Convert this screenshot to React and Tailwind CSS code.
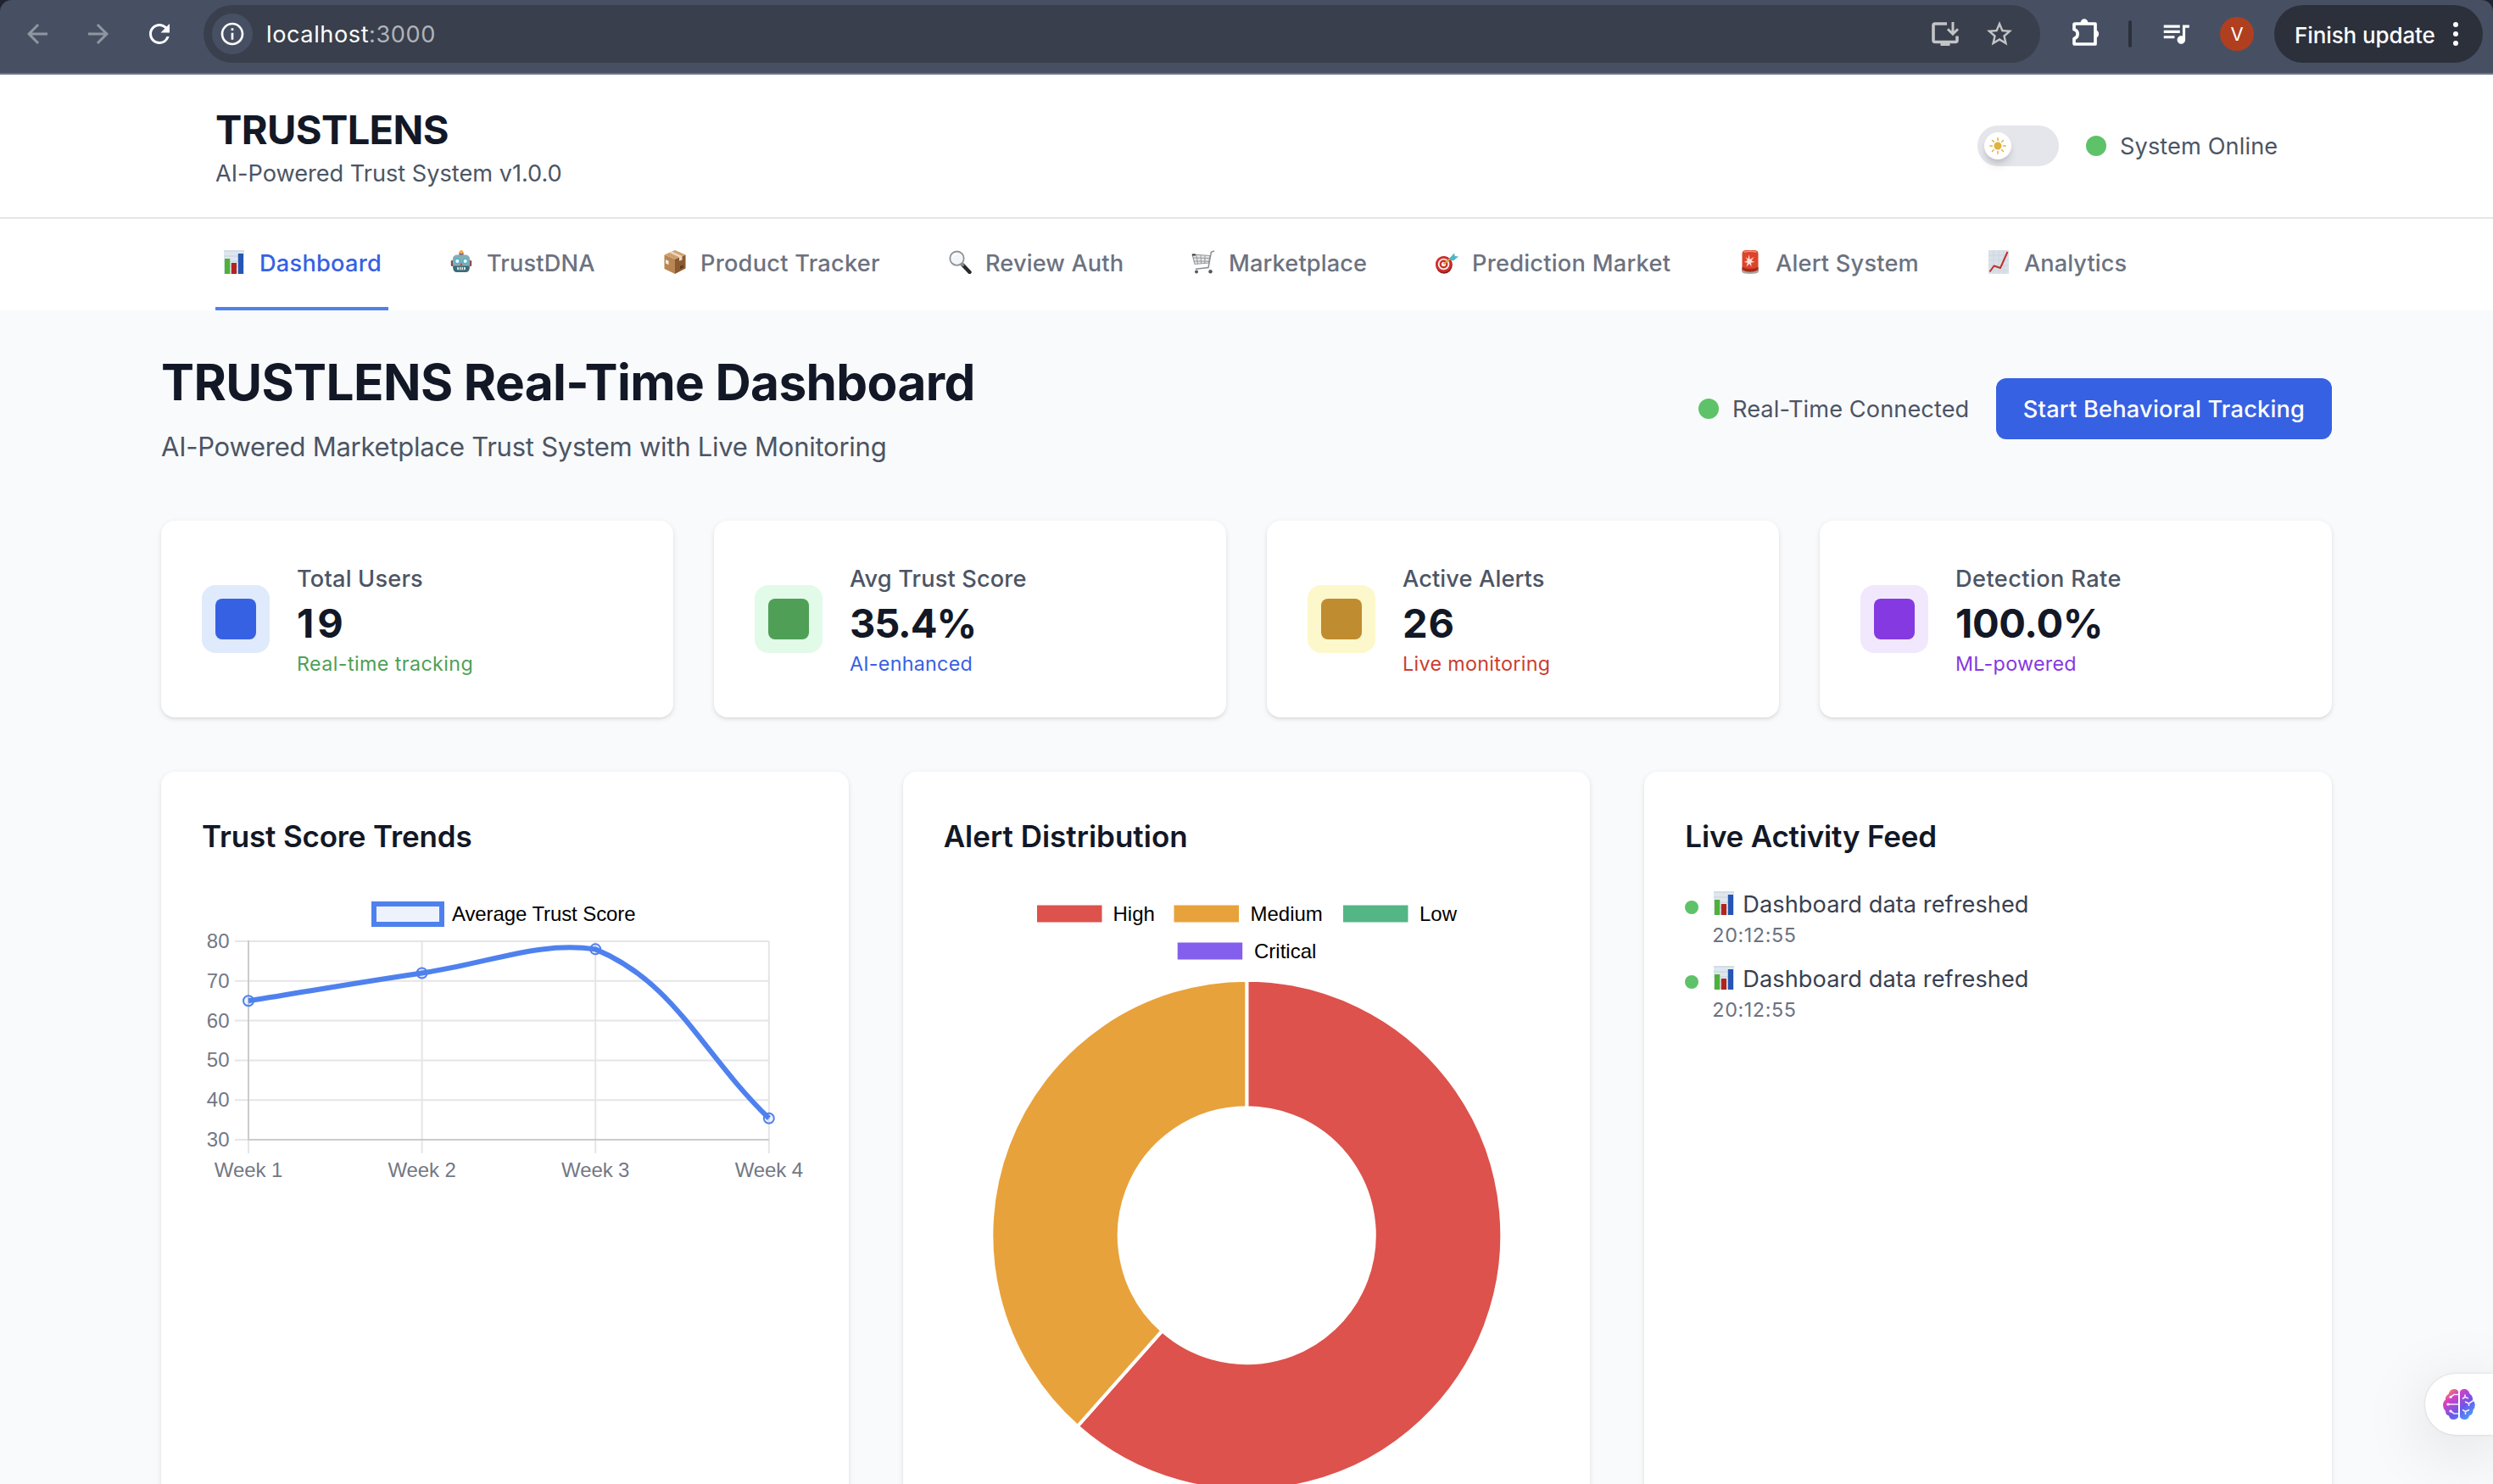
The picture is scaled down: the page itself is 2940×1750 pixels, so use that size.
import React from "react";
import { MdArrowBack, MdArrowForward, MdRefresh, MdInfoOutline, MdStarBorder, MdQueueMusic } from "react-icons/md";

/* ---------- emoji-style icons ---------- */

function BarChartIcon({ className }) {
  return (
    <svg viewBox="0 0 28 28" className={className}>
      <rect x="2" y="0" width="24" height="28" fill="#dfe7ee" />
      <path d="M2 1h24M2 7h24M2 13h24M2 19h24M2 25h24" stroke="#c6d2dc" strokeWidth="1" />
      <rect x="3" y="10" width="6.2" height="18" fill="#4fb13a" />
      <rect x="10.8" y="15" width="6.2" height="13" fill="#b32420" />
      <rect x="18.8" y="4" width="6.2" height="24" fill="#2556b4" />
    </svg>
  );
}

function RobotIcon({ className }) {
  return (
    <svg viewBox="0 0 28 28" className={className}>
      <rect x="11.500" y="2" width="5" height="4.500" rx="1" fill="#6a4a8c" />
      <circle cx="14" cy="2.200" r="2.200" fill="#f2a93b" />
      <rect x="1.800" y="12" width="3" height="7" rx="1.200" fill="#8a4a52" />
      <rect x="23.200" y="12" width="3" height="7" rx="1.200" fill="#8a4a52" />
      <path d="M3.800 11q0-5.600 5.800-5.600h8.800q5.800 0 5.800 5.600l-.6 10.500q-.5 4.500-5 4.500H9.400q-4.500 0-5-4.500z" fill="#86adb5" />
      <path d="M4.200 18.500l.2 3q.5 4.500 5 4.500h9.200q4.500 0 5-4.500l.2-3z" fill="#3b6c77" />
      <circle cx="9.300" cy="13" r="3.500" fill="#45b9d4" />
      <circle cx="18.700" cy="13" r="3.500" fill="#45b9d4" />
      <circle cx="9.300" cy="13" r="2" fill="#fff" />
      <circle cx="18.700" cy="13" r="2" fill="#fff" />
      <path d="M14 14.500l1.700 3.500h-3.400z" fill="#d9483b" />
      <rect x="9" y="20" width="10" height="3.200" rx="1" fill="#dfe6e8" />
      <path d="M11.500 20v3.200M14 20v3.200M16.500 20v3.200" stroke="#40616b" strokeWidth=".9" />
    </svg>
  );
}

function PackageIcon({ className }) {
  return (
    <svg viewBox="0 0 28 28" className={className}>
      <path d="M1.500 5.500L14 10.500V28L1.500 22z" fill="#b98552" />
      <path d="M14 10.500L26.500 5.500V21.500L14 28z" fill="#8a5a30" />
      <path d="M1.500 5.500L14 0L26.500 5.500L14 10.500z" fill="#cf9f6c" />
      <path d="M7.500 3L10.700 1.600L22.500 7v4.500l-3.500 1.300V8.300z" fill="#ead7be" />
      <path d="M3 11l3.500 1.700v4.500L3 15.500z" fill="#f1ebe2" />
      <path d="M20 19l3.500-1.500v3L20 22z" fill="#5c3a1d" />
    </svg>
  );
}

function MagnifierIcon({ className }) {
  return (
    <svg viewBox="0 0 28 28" className={className}>
      <path d="M17.500 17.500L25.500 26" stroke="#2a2a2c" strokeWidth="4.400" strokeLinecap="round" />
      <path d="M15.500 15.500l3 3" stroke="#8f9297" strokeWidth="2.600" />
      <circle cx="10.500" cy="9.700" r="8.200" fill="#f3f6f8" stroke="#8d9299" strokeWidth="1.800" />
      <path d="M5.500 8.500a5.500 5.500 0 0 1 5-4" stroke="#fff" strokeWidth="1.600" fill="none" />
    </svg>
  );
}

function CartIcon({ className }) {
  return (
    <svg viewBox="0 0 28 28" className={className} fill="none">
      <path d="M1 5l21 1.500L20.500 15 4 16.500z" fill="#e6e7e8" stroke="#97999c" strokeWidth="1.100" />
      <path d="M2 9l19.800.6M3 13l18 .2M6 5.500l1.500 10.700M11 5.800l.6 10M16 6.200l-.3 9.500" stroke="#97999c" strokeWidth="1" />
      <path d="M27 1l-3.600 1.200L20 20.500 5 22.200" stroke="#8b8d90" strokeWidth="1.500" />
      <circle cx="6" cy="25.500" r="2" fill="#55575a" />
      <circle cx="22.500" cy="25.300" r="2.200" fill="#55575a" />
      <path d="M1 5.500h4" stroke="#3a3c40" strokeWidth="2" />
    </svg>
  );
}

function TargetIcon({ className }) {
  return (
    <svg viewBox="0 0 28 28" className={className}>
      <ellipse cx="11" cy="17.500" rx="9.800" ry="10.200" fill="#8e1b18" />
      <circle cx="10.500" cy="16.500" r="9.500" fill="#cf2f2a" />
      <circle cx="10.500" cy="16.500" r="6.800" fill="#f6f2f0" />
      <circle cx="10.500" cy="16.500" r="4.900" fill="#cf2f2a" />
      <circle cx="10.500" cy="16.500" r="2.600" fill="#f6f2f0" />
      <path d="M10.500 16.500L20 8.500" stroke="#d8a03c" strokeWidth="2" />
      <path d="M17.500 9.500L23 3.500l.8 3.500L28 7.500 22.500 12l-3 .5z" fill="#4fb7c4" />
    </svg>
  );
}

function SirenIcon({ className }) {
  return (
    <svg viewBox="0 0 28 28" className={className}>
      <path d="M4 23h20v2q0 3-10 3T4 25z" fill="#a9a4a0" />
      <path d="M4.500 4q0-4 5-4h9q5 0 5 4v19q-4 2.500-9.500 2.500T4.500 23z" fill="#dd4429" />
      <path d="M4.500 20q9.500 4 19 0V23q-4 2.500-9.500 2.500T4.500 23z" fill="#a92818" />
      <path d="M6.500 2.300q7.500-2 15 0" stroke="#f3917a" strokeWidth="1.600" fill="none" />
      <path d="M12.500 5l1.200 6 4.800-3-3 4.500 4 1.500-4.500.8.600 4.700-2.600-3.500L9.500 19.500l1.300-4.700-4-.8 4-1.800L8.500 8l3 2.500z" fill="#fbe0d8" />
    </svg>
  );
}

function TrendIcon({ className }) {
  return (
    <svg viewBox="0 0 28 28" className={className}>
      <rect x="2" y="0" width="24" height="28" fill="#d9e1e9" />
      <path d="M2 6h24M2 12h24M2 18h24M2 24h24M8 0v28M14 0v28M20 0v28" stroke="#cbd5de" strokeWidth=".8" />
      <path d="M3.500 25.500L8.500 18.500l7.500 2.500L24.500 2" stroke="#c2302b" strokeWidth="2" fill="none" strokeLinejoin="round" />
    </svg>
  );
}

/* ---------- browser toolbar ---------- */

function InstallIcon() {
  return (
    <svg viewBox="0 0 32 28" className="h-7 w-8" fill="none" stroke="#c3c4c6" strokeWidth="3.600">
      <path d="M18 2H4Q2 2 2 4V21.500Q2 23.500 4 23.500H28Q30 23.500 30 21.500V16.500" />
      <path d="M10.500 26H21.500" strokeWidth="4" />
      <path d="M25 0V13M19 8.200L25 14.200L31 8.200" strokeWidth="3" />
    </svg>
  );
}

function PuzzleIcon() {
  return (
    <svg viewBox="0 0 32 32" className="size-8">
      <path
        d="M3 6H27V30H3Q2 30 2 29V23.500A5.600 5.600 0 0 0 2 12.700V7Q2 6 3 6Z"
        fill="none"
        stroke="#fff"
        strokeWidth="3.700"
        strokeLinejoin="round"
      />
      <path d="M9.500 5A4.500 4.700 0 0 1 18.500 5ZM27.500 13.500A4.500 4.600 0 0 1 27.500 22.500Z" fill="#fff" />
    </svg>
  );
}

function Toolbar() {
  return (
    <div className="bg-[#1f2430]">
      <div className="flex h-[88px] items-start rounded-t-[14px] border-b-2 border-[#6d7687] bg-[#475063] pt-1.5">
        <div className="flex h-[68px] w-full items-center">
          <MdArrowBack className="ml-[26px] size-9 text-[#8f96a2]" />
          <MdArrowForward className="ml-9 size-9 text-[#8f96a2]" />
          <MdRefresh className="ml-9 size-9 text-white" />
          <div className="ml-[34px] flex h-[68px] w-[2166px] items-center rounded-full bg-[#393f4c]">
            <div className="ml-2.5 flex size-12 items-center justify-center rounded-full bg-[#475063]">
              <MdInfoOutline className="size-8 text-white" />
            </div>
            <div className="ml-4 flex-1 pt-0.5 text-[27.2px] tracking-[0.55px] text-white">
              localhost<span className="text-[#b0b3b8]">:3000</span>
            </div>
            <InstallIcon />
            <MdStarBorder className="mr-[30px] ml-[30px] size-9 text-[#c3c4c6]" />
          </div>
          <div className="-mt-1 ml-[38px]">
            <PuzzleIcon />
          </div>
          <div className="ml-[34px] h-8 w-1 rounded-full bg-[#2b303b]" />
          <MdQueueMusic className="-mt-0.5 ml-[33px] size-[38px] text-white" />
          <div className="ml-[33px] flex size-10 items-center justify-center rounded-full bg-[#b03f20] text-[22px] text-white">V</div>
          <div className="ml-6 flex h-[68px] w-[246px] items-center rounded-full bg-[#2b303b] pl-6 text-[26px] font-medium tracking-[-0.1px] text-white">
            <span className="w-[187px] pt-0.5 whitespace-nowrap">Finish update</span>
            <div className="flex flex-col gap-[5px]">
              <i className="size-1.5 rounded-full bg-white" />
              <i className="size-1.5 rounded-full bg-white" />
              <i className="size-1.5 rounded-full bg-white" />
            </div>
          </div>
        </div>
      </div>
    </div>
  );
}

/* ---------- app header and tabs ---------- */

function SunIcon() {
  return (
    <svg viewBox="0 0 20 20" className="size-5" stroke="#e0b23e" strokeWidth="1.500" strokeLinecap="round">
      <circle cx="10" cy="10" r="4.500" fill="#e0b23e" stroke="none" />
      <path d="M10 .8v2.600M10 16.600v2.600M.8 10h2.600M16.600 10h2.600M3.500 3.500l1.800 1.800M14.700 14.700l1.800 1.800M3.500 16.500l1.800-1.800M14.700 5.300l1.800-1.800" />
    </svg>
  );
}

function Header() {
  return (
    <header className="flex items-center justify-between border-b-2 border-[#e5e6eb] bg-white px-[254px] pt-[33px] pb-[31px]">
      <div>
        <h1 className="text-[47px] leading-[64px] font-bold tracking-[-0.63px] text-[#121826]">TRUSTLENS</h1>
        <p className="text-[27.2px] leading-10 tracking-[-0.03px] text-[#4c5564]">AI-Powered Trust System v1.0.0</p>
      </div>
      <div className="-mt-0.5 flex items-center">
        <div className="flex h-12 w-24 items-center rounded-full bg-[#e5e6eb] pl-2">
          <div className="flex size-8 items-center justify-center rounded-full bg-white shadow-[0_8px_12px_-2px_rgba(0,0,0,0.12),0_4px_6px_-2px_rgba(0,0,0,0.1)]">
            <SunIcon />
          </div>
        </div>
        <div className="ml-8 size-6 rounded-full bg-[#5ec269]" />
        <span className="ml-4 w-[186px] pt-0.5 text-[27.2px] leading-10 tracking-[0.1px] whitespace-nowrap text-[#4c5564]">System Online</span>
      </div>
    </header>
  );
}

const TABS = [
  { label: "Dashboard", Icon: BarChartIcon, size: "w-[204px] tracking-[0.25px]", active: true },
  { label: "TrustDNA", Icon: RobotIcon, size: "w-[188px] tracking-[0.15px]" },
  { label: "Product Tracker", Icon: PackageIcon, size: "w-[272px] tracking-[0.25px]" },
  { label: "Review Auth", Icon: MagnifierIcon, size: "w-[223px] tracking-[0.13px]" },
  { label: "Marketplace", Icon: CartIcon, size: "w-[223px] tracking-[0.13px]" },
  { label: "Prediction Market", Icon: TargetIcon, size: "w-[294px] tracking-[0.25px]" },
  { label: "Alert System", Icon: SirenIcon, size: "w-[229px] tracking-[0.2px]" },
  { label: "Analytics", Icon: TrendIcon, size: "w-[182px] tracking-[0.06px]" },
];

function Tabs() {
  return (
    <nav className="flex gap-16 bg-white px-[254px]">
      {TABS.map(({ label, Icon, size, active }) => (
        <div
          key={label}
          className={
            "flex items-center gap-4 border-b-4 px-2 pt-[33px] pb-[31px] text-[27.2px] leading-10 font-medium whitespace-nowrap " +
            (active ? "border-[#4f81ee] text-[#3761e3] " : "border-transparent text-[#6c7280] ") +
            size
          }
        >
          <Icon className="-mt-1 size-7 shrink-0" />
          {label}
        </div>
      ))}
    </nav>
  );
}

/* ---------- dashboard ---------- */

const STATS = [
  { label: "Total Users", value: "19", note: "Real-time tracking", outer: "bg-[#dfeafc]", inner: "bg-[#3761e3]", lt: "tracking-[0.19px]", vt: "tracking-[4px]", nt: "tracking-[0.4px] text-[#4fa056]" },
  { label: "Avg Trust Score", value: "35.4%", note: "AI-enhanced", outer: "bg-[#e2fae8]", inner: "bg-[#4fa056]", lt: "tracking-[0.14px]", vt: "tracking-[-1.1px]", nt: "tracking-[0.26px] text-[#3761e3]" },
  { label: "Active Alerts", value: "26", note: "Live monitoring", outer: "bg-[#fdf8cb]", inner: "bg-[#c08c30]", lt: "tracking-[0.12px]", vt: "tracking-[1px]", nt: "tracking-[0.32px] text-[#cb3d30]" },
  { label: "Detection Rate", value: "100.0%", note: "ML-powered", outer: "bg-[#f2e8fd]", inner: "bg-[#8539e1]", lt: "tracking-[0.4px]", vt: "tracking-[-0.3px]", nt: "tracking-[0.28px] text-[#8539e1]" },
];

const CARD = "rounded-2xl bg-white p-12 shadow-[0_2px_6px_rgba(0,0,0,0.1),0_2px_4px_-2px_rgba(0,0,0,0.1)]";

function StatCard({ stat }) {
  return (
    <div className={"flex h-[232px] items-center gap-8 " + CARD}>
      <div className={"rounded-2xl p-4 " + stat.outer}>
        <div className={"size-12 rounded-lg " + stat.inner} />
      </div>
      <div className="pt-0.5">
        <p className={"text-[27.2px] leading-10 font-medium text-[#4c5564] " + stat.lt}>{stat.label}</p>
        <p className={"text-[47px] leading-[64px] font-bold text-[#121826] " + stat.vt}>{stat.value}</p>
        <p className={"text-[23.3px] leading-8 " + stat.nt}>{stat.note}</p>
      </div>
    </div>
  );
}

const POINTS = [65, 72, 78, 35.4].map((v, i) => ({ x: 55 + i * 204.6, y: 64 + (80 - v) * 4.68 }));

/* Smooth curve through the points, with tangents scaled by a 0.4 tension. */
function splinePath(pts) {
  const t = 0.4;
  const cps = pts.map((p, i) => {
    const a = pts[Math.max(i - 1, 0)];
    const b = pts[Math.min(i + 1, pts.length - 1)];
    const d1 = Math.hypot(p.x - a.x, p.y - a.y);
    const d2 = Math.hypot(b.x - p.x, b.y - p.y);
    const fa = (t * d1) / (d1 + d2);
    const fb = (t * d2) / (d1 + d2);
    return {
      px: p.x - fa * (b.x - a.x),
      py: p.y - fa * (b.y - a.y),
      nx: p.x + fb * (b.x - a.x),
      ny: p.y + fb * (b.y - a.y),
    };
  });
  return pts
    .map((p, i) =>
      i === 0
        ? `M${p.x} ${p.y}`
        : `C${cps[i - 1].nx} ${cps[i - 1].ny} ${cps[i].px} ${Math.max(cps[i].py, 64)} ${p.x} ${p.y}`
    )
    .join("");
}

function LineChart() {
  return (
    <svg viewBox="0 0 740 357" className="block h-[357px] w-[740px] font-['Liberation_Sans',Arial,sans-serif] text-[24px]">
      <rect x="203" y="20" width="80" height="24" fill="#edf2fd" stroke="#4f81ee" strokeWidth="6" />
      <text x="295" y="40" fill="#000" className="tracking-[-0.1px]">Average Trust Score</text>
      {[80, 70, 60, 50, 40, 30].map((v, i) => (
        <g key={v}>
          <path d={`M39 ${64 + i * 46.8}H669`} stroke="#e5e5e8" strokeWidth="2" />
          <text x="32.500" y={72 + i * 46.8} textAnchor="end" fill="#737885">{v}</text>
        </g>
      ))}
      {POINTS.map((p, i) => (
        <g key={i}>
          <path d={`M${p.x} 64V314`} stroke="#e5e5e8" strokeWidth="2" />
          <text x={p.x} y="342" textAnchor="middle" fill="#737885" className="tracking-[-0.1px]">{`Week ${i + 1}`}</text>
        </g>
      ))}
      <path d="M55 63V298H669" stroke="#cbcbce" strokeWidth="2" fill="none" />
      <path d={splinePath(POINTS)} stroke="#4f81ee" strokeWidth="6" fill="none" />
      {POINTS.map((p, i) => (
        <circle key={i} cx={p.x} cy={p.y} r="6" fill="#4f81ee" fillOpacity="0.1" stroke="#4f81ee" strokeWidth="2" />
      ))}
    </svg>
  );
}

function LegendItem({ x, y, tx, color, label }) {
  return (
    <g>
      <rect x={x} y={y} width="76.500" height="20" fill={color} />
      <text x={tx} y={y + 18} fill="#000">{label}</text>
    </g>
  );
}

function DoughnutChart() {
  const cx = 357.3;
  const cy = 410.7;
  const R = 301;
  const r = 150.5;
  const a = (16 / 26) * 2 * Math.PI;
  const pt = (rad, ang) => `${cx + rad * Math.sin(ang)} ${cy - rad * Math.cos(ang)}`;
  const high = `M${pt(R, 0)}A${R} ${R} 0 1 1 ${pt(R, a)}L${pt(r, a)}A${r} ${r} 0 1 0 ${pt(r, 0)}Z`;
  const medium = `M${pt(R, a)}A${R} ${R} 0 0 1 ${pt(R, 0)}L${pt(r, 0)}A${r} ${r} 0 0 0 ${pt(r, a)}Z`;
  return (
    <svg viewBox="0 0 715 715" className="block h-[715px] w-[715px] font-['Liberation_Sans',Arial,sans-serif] text-[24px]">
      <LegendItem x={110} y={21.5} tx={199.5} color="#dd524c" label="High" />
      <LegendItem x={271.5} y={21.5} tx={361.5} color="#e8a23b" label="Medium" />
      <LegendItem x={471} y={21.5} tx={561} color="#54b585" label="Low" />
      <LegendItem x={275.700} y={65.5} tx={366} color="#845fed" label="Critical" />
      <path d={high} fill="#dd524c" stroke="#fff" strokeWidth="4" />
      <path d={medium} fill="#e8a23b" stroke="#fff" strokeWidth="4" />
    </svg>
  );
}

function FeedItem() {
  return (
    <div className="flex items-start gap-4">
      <div className="mt-[15px] size-4 rounded-full bg-[#5ec269]" />
      <div>
        <p className="flex items-center text-[27.2px] leading-10 tracking-[0.05px] text-[#384151]">
          <BarChartIcon className="-mt-1 mr-2 size-7" />
          Dashboard data refreshed
        </p>
        <p className="text-[23.3px] leading-8 tracking-[0.6px] text-[#6c7280]">20:12:55</p>
      </div>
    </div>
  );
}

const CARD_TITLE = "mb-8 text-[35px] leading-[56px] font-semibold text-[#121826] ";

function BrainWidget() {
  return (
    <div className="absolute right-0 bottom-[58px] flex h-[72px] w-20 items-center rounded-l-full bg-white pl-[21px] shadow-[0_16px_80px_rgba(0,0,0,0.13),0_0_3px_rgba(0,0,0,0.15)]">
      <svg viewBox="0 0 38 36" className="h-9 w-[38px]">
        <defs>
          <linearGradient id="brain" x1="0.1" y1="0" x2="0.95" y2="1">
            <stop offset="0" stopColor="#f2a23a" />
            <stop offset="0.25" stopColor="#d93fc4" />
            <stop offset="0.6" stopColor="#6a57ea" />
            <stop offset="1" stopColor="#3fb2fb" />
          </linearGradient>
        </defs>
        <path
          d="M18 3V33Q16.500 36 12.500 36Q8 36 7 31.500Q3 30.500 3 26Q0 23 0 19Q0 15 3 12.500Q2.500 8 6.500 6Q8 0 13 0Q17 0 18 3ZM20 3V33Q21.500 36 25.500 36Q30 36 31 31.500Q35.500 30 35.500 25Q38 22.500 37.800 18Q37.500 15 35 13Q35.500 8 31.500 5.500Q30 0 25 0Q21.500 0 20 3Z"
          fill="url(#brain)"
        />
        <g stroke="#f3e9fd" strokeWidth="1.600" fill="none">
          <path d="M18 6.500H13L9 9.500M18 18H6M18 29H13L9 26" />
          <path d="M26 6.500V9.500L23 11.500M26 9.500L30 11M26 15L30.500 17L36 13.500M30.500 17V20M23 24.500L26.500 26.500L31 24.500M26.500 26.500V30" />
        </g>
        <circle cx="9" cy="9.500" r="1.600" fill="#fff" />
        <circle cx="6" cy="18" r="1.600" fill="#fff" />
        <circle cx="9" cy="26" r="1.600" fill="#fff" />
      </svg>
    </div>
  );
}

export default function App() {
  return (
    <div className="relative h-[1750px] w-[2940px] overflow-hidden bg-[#f9fafc] font-['Inter','Liberation_Sans',sans-serif]">
      <Toolbar />
      <Header />
      <Tabs />
      <main className="px-[190px] pt-12">
        <div className="flex h-[136px] items-center justify-between">
          <div className="pt-0.5">
            <h2 className="text-[58.5px] leading-[72px] font-bold tracking-[-0.62px] text-[#121826]">TRUSTLENS Real-Time Dashboard</h2>
            <p className="mt-4 text-[31px] leading-[48px] tracking-[-0.25px] text-[#4c5564]">
              AI-Powered Marketplace Trust System with Live Monitoring
            </p>
          </div>
          <div className="flex items-center">
            <div className="size-6 rounded-full bg-[#5ec269]" />
            <span className="ml-4 w-[279px] pt-0.5 text-[27.2px] leading-10 tracking-[0.08px] whitespace-nowrap text-[#4c5564]">Real-Time Connected</span>
            <button className="ml-8 h-[72px] w-[396px] rounded-xl bg-[#3761e3] pt-0.5 text-[27.2px] font-medium tracking-[0.22px] text-white">
              Start Behavioral Tracking
            </button>
          </div>
        </div>
        <div className="mt-16 grid grid-cols-4 gap-12">
          {STATS.map((s) => (
            <StatCard key={s.label} stat={s} />
          ))}
        </div>
        <div className="mt-16 grid h-[900px] grid-cols-3 gap-16">
          <section className={CARD}>
            <h3 className={CARD_TITLE + "tracking-[-0.16px]"}>Trust Score Trends</h3>
            <LineChart />
          </section>
          <section className={CARD}>
            <h3 className={CARD_TITLE}>Alert Distribution</h3>
            <DoughnutChart />
          </section>
          <section className={CARD}>
            <h3 className={CARD_TITLE + "tracking-[-0.2px]"}>Live Activity Feed</h3>
            <div className="flex flex-col gap-4 pt-px">
              <FeedItem />
              <FeedItem />
            </div>
          </section>
        </div>
      </main>
      <BrainWidget />
    </div>
  );
}
